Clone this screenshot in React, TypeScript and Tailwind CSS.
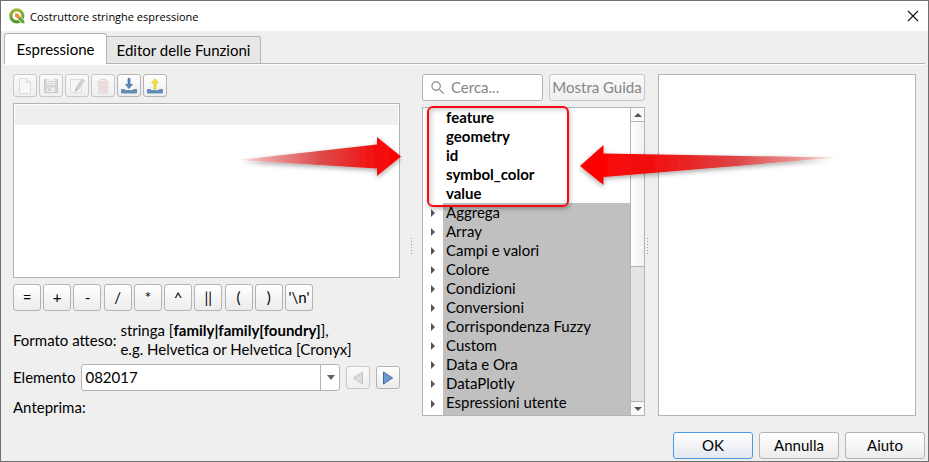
import React from "react";

const raised = "rounded-[3px] border border-[#b4b4b4] bg-linear-to-b from-white to-[#ececec]";
const faded = "rounded-[3px] border border-[#c8c8c8] bg-linear-to-b from-[#fafafa] to-[#efefef]";

function QgisLogo() {
  return (
    <svg viewBox="0 0 16 16" className="size-4" aria-hidden="true">
      <defs>
        <linearGradient id="ring" x1="0" y1="0" x2="0" y2="1"><stop stopColor="#9cb83a" /><stop offset="1" stopColor="#4f9a2c" /></linearGradient>
      </defs>
      <circle cx="7.8" cy="7.8" r="6" fill="#fff" stroke="url(#ring)" strokeWidth="3.2" />
      <path d="M8.500 8.200h3l4.300 4.600v3h-2.800L8.500 11z" fill="#6aa836" stroke="#fff" strokeWidth=".8" />
      <path d="M6 5.600h2.800L10.500 7.500v2.800H8L6 8.300z" fill="#f08a30" />
    </svg>
  );
}

function NewIcon() {
  return (
    <svg viewBox="0 0 16 16" className="size-4" aria-hidden="true">
      <path d="M2.500.5h7l4 4v11h-11z" fill="#f8f8f8" stroke="#dadada" />
      <path d="M9.500.5v4h4" fill="#ededed" stroke="#dadada" />
    </svg>
  );
}

function SaveIcon() {
  return (
    <svg viewBox="0 0 16 16" className="size-4" aria-hidden="true">
      <path d="M1.500 1.500h13v13h-13z" fill="#d2d5d7" stroke="#c6c9cb" />
      <path d="M4 1h8v6H4z" fill="#f1f1f1" />
      <path d="M5 3h6v1H5zM5 5h6v1H5z" fill="#d6d6d6" />
      <path d="M4 9.500h8V14H4z" fill="#ececec" />
      <path d="M5.500 10.500h2V13h-2z" fill="#bfc2c4" />
    </svg>
  );
}

function EditIcon() {
  return (
    <svg viewBox="0 0 16 16" className="size-4" aria-hidden="true">
      <path d="M1.500 1.500h11v13h-11z" fill="#f7f7f7" stroke="#dadada" />
      <path d="M6.500 13.500l.7-4L13 1l2.300 1.600-5.800 8.600z" fill="#d4d5cd" stroke="#c2c3bb" strokeWidth=".8" />
      <path d="M6.500 13.500l.4-2.500 1.500 1.100z" fill="#a9a9a5" />
    </svg>
  );
}

function TrashIcon() {
  return (
    <svg viewBox="0 0 16 16" className="size-4" aria-hidden="true">
      <path d="M3.500 5.500h9l-.5 9.500H4z" fill="#f4ecec" stroke="#e0cdce" />
      <path d="M2 3.800h12M5.500 3V1.500h5V3M6 7v6.500M8 7v6.500M10 7v6.500" fill="none" stroke="#e0cacb" />
    </svg>
  );
}

function ImportIcon() {
  return (
    <svg viewBox="0 0 16 16" className="size-4" aria-hidden="true">
      <path d="M.5 11.500h3v1h9v-1h3V15H.5z" fill="#6690bb" stroke="#4c77a5" strokeWidth=".7" />
      <path d="M7 .5h2v6h2.500L8 10.500 4.500 6.500H7z" fill="#5b88b8" stroke="#426f9f" strokeWidth=".7" />
    </svg>
  );
}

function ExportIcon() {
  return (
    <svg viewBox="0 0 16 16" className="size-4" aria-hidden="true">
      <path d="M.5 11.500h3v1h9v-1h3V15H.5z" fill="#6690bb" stroke="#4c77a5" strokeWidth=".7" />
      <path d="M7 11h2V5h2.500L8 .7 4.500 5H7z" fill="#f4e636" stroke="#d5c42e" strokeWidth=".7" />
    </svg>
  );
}

const tools = [
  { label: "Nuovo", icon: <NewIcon />, off: true },
  { label: "Salva", icon: <SaveIcon />, off: true },
  { label: "Modifica", icon: <EditIcon />, off: true },
  { label: "Elimina", icon: <TrashIcon />, off: true },
  { label: "Importa", icon: <ImportIcon />, off: false },
  { label: "Esporta", icon: <ExportIcon />, off: false },
];

const operators = ["=", "+", "-", "/", "*", "^", "||", "(", ")", "'\\n'"];
const variables = ["feature", "geometry", "id", "symbol_color", "value"];
const groups = [
  "Aggrega", "Array", "Campi e valori", "Colore", "Condizioni", "Conversioni",
  "Corrispondenza Fuzzy", "Custom", "Data e Ora", "DataPlotly", "Espressioni utente",
];

function Grip() {
  return (
    <div className="flex flex-col gap-[2px]" aria-hidden="true">
      {[0, 1, 2, 3, 4, 5].map((n) => (
        <span key={n} className="size-px bg-[#999]" />
      ))}
    </div>
  );
}

function ExpressionPane() {
  return (
    <section className="flex min-w-0 flex-col">
      <div className="flex gap-[2px]">
        {tools.map((t) => (
          <button key={t.label} aria-label={t.label} disabled={t.off} className={`flex h-[23px] w-6 items-center justify-center ${t.off ? faded : raised}`}>
            {t.icon}
          </button>
        ))}
      </div>
      <div className="mt-[6px] flex h-[175px] border border-[#b4b4b4] bg-white p-px">
        <textarea aria-label="Espressione" className="block w-full resize-none bg-linear-to-b from-[#efefef] from-[20px] to-white to-[20px] px-1 outline-none" />
      </div>
      <div className="mt-[6px] flex w-[300px] justify-between">
        {operators.map((o) => (
          <button key={o} className={`h-[27px] w-7 text-center ${raised}`}>{o}</button>
        ))}
      </div>
      <div className="mt-[10px] flex items-center gap-1 whitespace-nowrap">
        <span>Formato atteso:</span>
        <p>stringa [<b>family|family[foundry]</b>],<br />e.g. Helvetica or Helvetica [Cronyx]</p>
      </div>
      <div className="mt-[5px] flex items-center gap-[6px]">
        <label htmlFor="element">Elemento</label>
        <div className="relative h-[27px] flex-1">
          <select id="element" className="h-full w-full appearance-none rounded-[3px] border border-[#b4b4b4] bg-white px-[3px] outline-none">
            <option>082017</option>
          </select>
          <span className="pointer-events-none absolute inset-y-0 right-0 flex w-5 items-center justify-center border-l border-[#b4b4b4]">
            <svg viewBox="0 0 8 5" className="h-[5px] w-2"><path d="M0 0h8L4 5z" fill="#606060" /></svg>
          </span>
        </div>
        <button aria-label="Precedente" disabled className={`flex h-[23px] w-6 items-center justify-center ${faded}`}>
          <svg viewBox="0 0 10 14" className="h-[14px] w-[10px]"><path d="M9.500 1v12L.5 7z" fill="#dcdcdc" stroke="#c4c4c4" /></svg>
        </button>
        <button aria-label="Successivo" className={`flex h-[23px] w-6 items-center justify-center ${raised}`}>
          <svg viewBox="0 0 10 14" className="h-[14px] w-[10px]"><path d="M.5 1v12l9-6z" fill="#6e9bcb" stroke="#3f6a9c" /></svg>
        </button>
      </div>
      <p className="mt-[7px]">Anteprima:</p>
    </section>
  );
}

function FunctionTree() {
  return (
    <section className="flex min-w-0 flex-col gap-[6px]">
      <div className="flex h-[27px] gap-[6px]">
        <div className="flex min-w-0 flex-1 items-center gap-[7px] rounded-[3px] border border-[#b4b4b4] bg-white pl-2">
          <svg viewBox="0 0 14 14" className="size-[13px] shrink-0" fill="none" stroke="#8a8a8a" strokeWidth="1.3" aria-hidden="true">
            <circle cx="5.500" cy="5.500" r="4.500" /><path d="M9 9l4.500 4.500" />
          </svg>
          <input aria-label="Cerca" placeholder="Cerca..." className="w-full min-w-0 bg-transparent outline-none placeholder:text-[#858585]" />
        </div>
        <button disabled className={`w-24 whitespace-nowrap text-[#858585] ${faded}`}>Mostra Guida</button>
      </div>
      <div className="relative flex h-[309px] border border-[#b4b4b4] bg-white">
        <ul className="min-w-0 flex-1">
          {variables.map((v) => (
            <li key={v} className="h-[19px] pl-[23px] font-bold">{v}</li>
          ))}
          {groups.map((g, i) => (
            <li key={g} className={`flex items-center ${i === groups.length - 1 ? "h-[22px]" : "h-[19px]"}`}>
              <svg viewBox="0 0 4 8" className="ml-2 mr-2 h-2 w-1 shrink-0" aria-hidden="true"><path d="M0 0l4 4-4 4z" fill="#555" /></svg>
              <span className={`flex-1 bg-[#c0c0c0] pl-[3px] whitespace-nowrap ${i === groups.length - 1 ? "h-[22px]" : "h-[19px]"}`}>{g}</span>
            </li>
          ))}
        </ul>
        <div className="flex w-[14px] flex-col border-l border-[#b4b4b4] bg-[#e4e4e4]" aria-hidden="true">
          <div className="flex h-[14px] items-center justify-center border-b border-[#b4b4b4] bg-[#fafafa]">
            <svg viewBox="0 0 8 4" className="h-1 w-2"><path d="M0 4h8L4 0z" fill="#555" /></svg>
          </div>
          <div className="h-[145px] border-b border-[#b4b4b4] bg-linear-to-r from-white to-[#f0f0f0]" />
          <div className="mt-auto flex h-[14px] items-center justify-center border-t border-[#b4b4b4] bg-[#fafafa]">
            <svg viewBox="0 0 8 4" className="h-1 w-2"><path d="M0 0h8L4 4z" fill="#555" /></svg>
          </div>
        </div>
        <div className="pointer-events-none absolute top-[-2px] left-1 h-[101px] w-[142px] rounded-[6px] border-2 border-[#f50a14] shadow-[inset_2px_2px_5px_#0003,1px_2px_4px_#0004]" />
        <svg viewBox="0 0 264 48" className="pointer-events-none absolute top-[37px] left-[156px] h-12 w-[264px]" aria-hidden="true">
          <defs>
            <linearGradient id="toRight"><stop stopColor="#f00" /><stop offset=".3" stopColor="#f01212" /><stop offset=".6" stopColor="#dc4444" /><stop offset=".85" stopColor="#eb9595" /><stop offset="1" stopColor="#f6b5b5" stopOpacity=".2" /></linearGradient>
            <filter id="softRight" x="-10%" y="-30%" width="120%" height="170%"><feDropShadow dx="0" dy="2" stdDeviation="2.500" floodOpacity=".35" /></filter>
          </defs>
          <path d="M1 21L24.500 0v8.500L259 12.500 24.500 32v8z" fill="url(#toRight)" filter="url(#softRight)" />
        </svg>
        <svg viewBox="0 0 170 54" className="pointer-events-none absolute top-[22px] left-[-190px] h-[54px] w-[170px]" aria-hidden="true">
          <defs>
            <linearGradient id="toLeft"><stop stopColor="#f6b5b5" stopOpacity=".2" /><stop offset=".15" stopColor="#eea5a5" /><stop offset=".5" stopColor="#dc4c4c" /><stop offset=".85" stopColor="#f30e0e" /><stop offset="1" stopColor="#f00" /></linearGradient>
            <filter id="softLeft" x="-10%" y="-30%" width="120%" height="170%"><feDropShadow dx="0" dy="2" stdDeviation="2.500" floodOpacity=".35" /></filter>
          </defs>
          <path d="M5 30L144 14.500V7l24 19.500L144 46v-7.500z" fill="url(#toLeft)" filter="url(#softLeft)" />
        </svg>
      </div>
    </section>
  );
}

export default function App() {
  return (
    <main className="flex min-h-screen flex-col border border-[#707070] bg-[#efefef] font-[Lato,'Open_Sans',sans-serif] text-[15px] leading-[19px] text-black">
      <header className="flex h-[30px] items-center gap-[5px] bg-white pl-2 pr-[9px]">
        <QgisLogo />
        <h1 className="flex-1 font-['Open_Sans',sans-serif] text-[11px]">Costruttore stringhe espressione</h1>
        <button aria-label="Chiudi">
          <svg viewBox="0 0 12 12" className="size-3" stroke="#111" strokeWidth="1.1"><path d="M1 1l10 10M11 1L1 11" /></svg>
        </button>
      </header>
      <div role="tablist" className="mx-[3px] mt-[3px] flex h-[30px] items-end border-b border-[#b4b4b4]">
        <button role="tab" aria-selected="true" className="-mb-px h-[31px] w-[103px] rounded-t-[3px] border border-b-0 border-[#b4b4b4] bg-white">Espressione</button>
        <button role="tab" aria-selected="false" className="h-[27px] w-[154px] rounded-tr-[3px] border border-b-0 border-l-0 border-[#b4b4b4] bg-[#e7e7e7]">Editor delle Funzioni</button>
      </div>
      <div className="mx-[3px] h-px bg-white" />
      <div className="grid grid-cols-[387fr_22px_223fr_13px_258fr] pt-[9px] pr-3 pl-3">
        <ExpressionPane />
        <div className="flex items-center justify-center"><Grip /></div>
        <FunctionTree />
        <div className="flex items-center justify-start pl-[2px]"><Grip /></div>
        <section aria-label="Guida" className="h-[342px] border border-[#b4b4b4] bg-white" />
      </div>
      <footer className="mt-[15px] flex justify-end gap-[6px] pr-[3px] pb-[2px]">
        <button className="h-[27px] w-20 rounded-[3px] border border-[#4a98e8] bg-linear-to-b from-white to-[#e3e7ef]">OK</button>
        <button className={`h-[27px] w-20 ${raised}`}>Annulla</button>
        <button className={`h-[27px] w-20 ${raised}`}>Aiuto</button>
      </footer>
    </main>
  );
}
